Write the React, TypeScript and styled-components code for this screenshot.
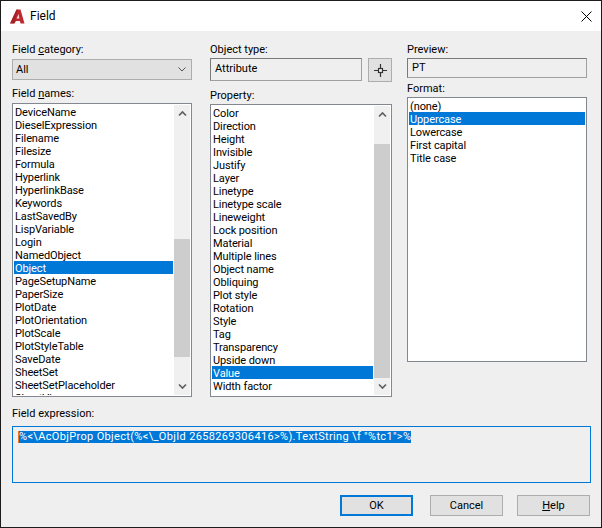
import React from 'react';
import styled, { createGlobalStyle } from 'styled-components';

const GlobalStyle = createGlobalStyle`
    html, body {
        margin: 0;
        padding: 0;
        background: #efefef;
    }
    * {
        box-sizing: border-box;
    }
`;

const Window = styled.div`
    width: 602px;
    height: 528px;
    display: flex;
    flex-direction: column;
    background: #efefef;
    border: 1px solid #1c1c1c;
    font-family: Roboto, 'Liberation Sans', Arial, sans-serif;
    font-size: 11px;
    color: #000;
    overflow: hidden;
`;
const TitleBar = styled.div`
    height: 30px;
    display: flex;
    align-items: center;
    background: #fff;
    padding: 0 9px;
    font-size: 12px;
    flex: none;
`;
const TitleText = styled.span`
    margin-left: 5px;
    flex: 1;
`;
const Body = styled.div`
    flex: 1;
    display: flex;
    flex-direction: column;
    padding: 12px 10px 0 11px;
`;
const Columns = styled.div`
    display: flex;
    align-items: flex-start;
`;
const Column = styled.div<{ $width: number; $after?: number }>`
    width: ${p => p.$width}px;
    margin-right: ${p => p.$after ?? 0}px;
    display: flex;
    flex-direction: column;
`;
const Label = styled.label<{ $top?: number }>`
    display: block;
    height: 13px;
    line-height: 13px;
    margin-top: ${p => p.$top ?? 0}px;
`;
const Select = styled.div`
    height: 21px;
    margin-top: 3px;
    display: flex;
    align-items: center;
    justify-content: space-between;
    padding: 0 5px 0 3px;
    background: #e1e1e1;
    border: 1px solid #adadad;
`;
const ObjectRow = styled.div`
    display: flex;
    gap: 6px;
    margin-top: 2px;
`;
const ReadOnly = styled.div<{ $height: number }>`
    flex: 1;
    height: ${p => p.$height}px;
    display: flex;
    align-items: center;
    padding: 0 0 2px 4px;
    background: #efefef;
    border: 1px solid #7a7a7a;
    border-right-color: #a0a0a0;
    border-bottom-color: #a0a0a0;
`;
const PickButton = styled.div`
    width: 24px;
    height: 24px;
    display: flex;
    align-items: center;
    justify-content: center;
    background: #e1e1e1;
    border: 1px solid #adadad;
`;
const ListBox = styled.div<{ $height: number; $top: number }>`
    height: ${p => p.$height}px;
    margin-top: ${p => p.$top}px;
    display: flex;
    padding: 1px;
    background: #fff;
    border: 1px solid #828790;
    overflow: hidden;
`;
const Items = styled.div`
    flex: 1;
    overflow: hidden;
`;
const Item = styled.div<{ $selected?: boolean }>`
    height: 13px;
    line-height: 15px;
    padding-left: 1px;
    white-space: nowrap;
    letter-spacing: -0.1px;
    overflow: hidden;
    background: ${p => (p.$selected ? '#0078d7' : 'transparent')};
    color: ${p => (p.$selected ? '#fff' : '#000')};
`;
const ScrollBar = styled.div`
    width: 16px;
    margin-left: 1px;
    display: flex;
    flex-direction: column;
    background: #f0f0f0;
`;
const ScrollArrow = styled.div`
    height: 17px;
    display: flex;
    align-items: center;
    justify-content: center;
    flex: none;
`;
const ScrollTrack = styled.div`
    flex: 1;
    display: flex;
    flex-direction: column;
`;
const ScrollThumb = styled.div<{ $top: number; $height: number }>`
    margin-top: ${p => p.$top}px;
    height: ${p => p.$height}px;
    background: #cdcdcd;
`;
const Expression = styled.div`
    width: 579px;
    height: 57px;
    margin-top: 6px;
    padding: 3px 5px;
    border: 1px solid #0078d7;
    background: #efefef;
`;
const Selected = styled.span`
    display: inline-block;
    height: 12px;
    line-height: 12px;
    background: #0078d7;
    color: #fff;
    border-left: 1px solid #e8761e;
    white-space: pre;
    letter-spacing: 0.34px;
`;
const Footer = styled.div`
    display: flex;
    justify-content: flex-end;
    gap: 14px;
    margin-top: 12px;
    padding-right: 1px;
`;
const DialogButton = styled.button<{ $primary?: boolean }>`
    width: 73px;
    height: 21px;
    padding: 0;
    font: inherit;
    color: #000;
    background: #e1e1e1;
    border: ${p => (p.$primary ? '2px solid #0078d7' : '1px solid #adadad')};
    margin-right: ${p => (p.$primary ? '3px' : '0')};
`;

const fieldNames = [
    'DeviceName', 'DieselExpression', 'Filename', 'Filesize', 'Formula', 'Hyperlink',
    'HyperlinkBase', 'Keywords', 'LastSavedBy', 'LispVariable', 'Login', 'NamedObject',
    'Object', 'PageSetupName', 'PaperSize', 'PlotDate', 'PlotOrientation', 'PlotScale',
    'PlotStyleTable', 'SaveDate', 'SheetSet', 'SheetSetPlaceholder', 'SheetView',
];
const properties = [
    'Color', 'Direction', 'Height', 'Invisible', 'Justify', 'Layer', 'Linetype',
    'Linetype scale', 'Lineweight', 'Lock position', 'Material', 'Multiple lines',
    'Object name', 'Obliquing', 'Plot style', 'Rotation', 'Style', 'Tag', 'Transparency',
    'Upside down', 'Value', 'Width factor',
];
const formats = ['(none)', 'Uppercase', 'Lowercase', 'First capital', 'Title case'];

const Chevron = ({ up }: { up?: boolean }) => (
    <svg width="9" height="7" viewBox="0 0 9 7">
        <path
            d={up ? 'M1 5.5 L4.5 2 L8 5.5' : 'M1 1.5 L4.5 5 L8 1.5'}
            fill="none"
            stroke="#606060"
            strokeWidth="1.7"
        />
    </svg>
);

const ComboChevron = () => (
    <svg width="8" height="5" viewBox="0 0 8 5">
        <path d="M0.5 0.5 L4 4 L7.5 0.5" fill="none" stroke="#555" strokeWidth="1" />
    </svg>
);

const Logo = () => (
    <svg width="15" height="15" viewBox="0 0 15 15">
        <path d="M0 14.5 L6.5 0.5 H10.5 L14.5 14.5 H10.5 L9.9 12 H6 L4.4 14.5 Z" fill="#bf2a30" />
        <path d="M6.6 9.4 H9.4 L8.6 5 Z" fill="#f2d8d8" />
        <path d="M0 14.5 L6.5 0.5 H8 L4.4 14.5 Z" fill="#8f1a1e" opacity="0.55" />
    </svg>
);

const CloseIcon = () => (
    <svg width="11" height="11" viewBox="0 0 11 11">
        <path d="M0.5 0.5 L10.5 10.5 M10.5 0.5 L0.5 10.5" stroke="#000" strokeWidth="1" fill="none" />
    </svg>
);

const PickIcon = () => (
    <svg width="13" height="13" viewBox="0 0 13 13">
        <path d="M0 6.5 H4 M9 6.5 H13 M6.5 0 V4 M6.5 9 V13" stroke="#333" strokeWidth="1.2" fill="none" />
        <rect x="4.5" y="4.5" width="4" height="4" fill="#f0f0f0" stroke="#333" strokeWidth="1.2" />
    </svg>
);

type ListProps = {
    items: string[];
    selected: string;
    height: number;
    top: number;
    thumb?: { top: number; height: number };
};

const List = ({ items, selected, height, top, thumb }: ListProps) => (
    <ListBox $height={height} $top={top}>
        <Items>
            {items.map(item => (
                <Item key={item} $selected={item === selected}>
                    {item}
                </Item>
            ))}
        </Items>
        {thumb && (
            <ScrollBar>
                <ScrollArrow>
                    <Chevron up />
                </ScrollArrow>
                <ScrollTrack>
                    <ScrollThumb $top={thumb.top} $height={thumb.height} />
                </ScrollTrack>
                <ScrollArrow>
                    <Chevron />
                </ScrollArrow>
            </ScrollBar>
        )}
    </ListBox>
);

const App = () => (
    <>
        <GlobalStyle />
        <Window>
            <TitleBar>
                <Logo />
                <TitleText>Field</TitleText>
                <CloseIcon />
            </TitleBar>
            <Body>
                <Columns>
                    <Column $width={180} $after={18}>
                        <Label>
                            Field <u>c</u>ategory:
                        </Label>
                        <Select>
                            All
                            <ComboChevron />
                        </Select>
                        <Label $top={7}>
                            Field <u>n</u>ames:
                        </Label>
                        <List
                            items={fieldNames}
                            selected="Object"
                            height={294}
                            top={3}
                            thumb={{ top: 117, height: 118 }}
                        />
                    </Column>
                    <Column $width={182} $after={15}>
                        <Label>Object type:</Label>
                        <ObjectRow>
                            <ReadOnly $height={23}>Attribute</ReadOnly>
                            <PickButton>
                                <PickIcon />
                            </PickButton>
                        </ObjectRow>
                        <Label $top={7}>Property:</Label>
                        <List
                            items={properties}
                            selected="Value"
                            height={293}
                            top={2}
                            thumb={{ top: 21, height: 234 }}
                        />
                    </Column>
                    <Column $width={180}>
                        <Label>Preview:</Label>
                        <ObjectRow>
                            <ReadOnly $height={20}>PT</ReadOnly>
                        </ObjectRow>
                        <Label $top={4}>Format:</Label>
                        <List items={formats} selected="Uppercase" height={265} top={2} />
                    </Column>
                </Columns>
                <Label $top={10}>Field expression:</Label>
                <Expression>
                    <Selected>{'%<\\AcObjProp Object(%<\\_ObjId 2658269306416>%).TextString \\f "%tc1">%'}</Selected>
                </Expression>
                <Footer>
                    <DialogButton $primary>OK</DialogButton>
                    <DialogButton>Cancel</DialogButton>
                    <DialogButton>
                        <u>H</u>elp
                    </DialogButton>
                </Footer>
            </Body>
        </Window>
    </>
);

export default App;
